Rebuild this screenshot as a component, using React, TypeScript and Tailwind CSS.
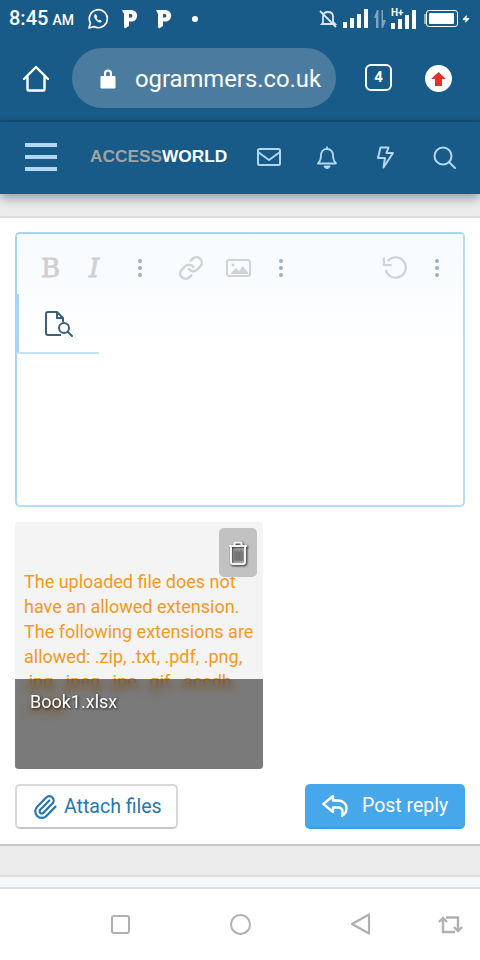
import React from 'react';
import { Link, Paperclip, Zap } from 'lucide-react';

const SignalBars = ({ className }: { className?: string }) => (
  <div className={`flex h-[19px] items-end gap-[3px] ${className || ''}`}>
    <span className="h-[6px] w-[4px] bg-white" />
    <span className="h-[10px] w-[4px] bg-white" />
    <span className="h-[14px] w-[4px] bg-white" />
    <span className="h-[19px] w-[4px] bg-white" />
  </div>
);

const PIcon = ({ className }: { className?: string }) => (
  <svg width="16" height="20" viewBox="0 0 16 20" className={className} fill="white">
    <path fillRule="evenodd" d="M0 1h9.500a5.800 5.800 0 0 1 1 11.500H7V17l-4 2.500-1-1.500V5zM7 5v3.500h2a1.800 1.800 0 0 0 0-3.500z" />
  </svg>
);

const StatusBar = () => (
  <div className="flex h-[37px] items-center justify-between pl-[9px] pr-[10px] text-white">
    <div className="flex items-center">
      <span className="text-[20px] font-medium leading-[37px]">8:45</span>
      <span className="ml-[4px] mt-[3px] text-[14px] font-medium">AM</span>
      <svg width="22" height="22" viewBox="0 0 22 22" fill="none" stroke="white" strokeWidth="1.700" className="ml-[13px]">
        <path d="M2 20l1.400-5A9 9 0 1 1 7 18.600L2 20z" strokeLinejoin="round" />
        <path d="M8 6.500c-1 1-1 3 1 5.300s4 3 5.500 1.700l-1.500-1.500-1.300.7c-1-.5-2-1.500-2.500-2.700l.8-1.100-1-2.100z" fill="white" strokeWidth="0.600" />
      </svg>
      <PIcon className="ml-[13px]" />
      <PIcon className="ml-[18px]" />
      <span className="ml-[20px] h-[6px] w-[6px] rounded-full bg-white" />
    </div>
    <div className="flex items-center">
      <svg width="19" height="20" viewBox="0 0 19 20" fill="none" stroke="#dce6ee" strokeWidth="1.800">
        <path d="M4 14V8c0-3 2-5 5-5s5 2 5 5v5l2 2H3z" />
        <path d="M1 2l16 16" />
      </svg>
      <SignalBars className="ml-[5px]" />
      <svg width="14" height="20" viewBox="0 0 14 20" className="ml-[5px]" fill="#7fa3bd">
        <path d="M1 9l3-8h1.500v18H3V9zM8.500 1H10v10h3l-3 8H8.500z" />
      </svg>
      <div className="relative ml-[4px] h-[20px] w-[25px]">
        <span className="absolute left-0 -top-[1px] text-[10px] font-bold leading-[9px]">H+</span>
        <SignalBars className="absolute bottom-0 left-0" />
      </div>
      <span className="ml-[8px] h-[10px] w-[2px] bg-[#8fb0c8]" />
      <div className="h-[17px] w-[32px] rounded-[3px] border border-white p-[2px]">
        <div className="h-full w-[25px] rounded-[1px] bg-white" />
      </div>
      <Zap size={8} fill="white" stroke="white" className="ml-[4px]" />
    </div>
  </div>
);

const BrowserBar = () => (
  <div className="flex h-[83px] items-start pl-[22px]">
    <svg width="28" height="28" viewBox="0 0 28 28" fill="none" stroke="white" strokeWidth="2.400" strokeLinejoin="round" strokeLinecap="round" className="mt-[28px]">
      <path d="M2 14L14 2l12 12M5.500 12v12.500a1 1 0 0 0 1 1h15a1 1 0 0 0 1-1V12" />
    </svg>
    <div className="ml-[22px] mt-[11px] flex h-[60px] w-[264px] items-center rounded-[30px] bg-[#4b7ca0] pl-[28px] text-white">
      <svg width="16" height="21" viewBox="0 0 16 21" fill="white">
        <path d="M4 8V5.500a4 4 0 0 1 8 0V8h2.500a1 1 0 0 1 1 1v10.500a1 1 0 0 1-1 1h-13a1 1 0 0 1-1-1V9a1 1 0 0 1 1-1zm2 0h4V5.500a2 2 0 0 0-4 0z" />
      </svg>
      <span className="ml-[19px] mt-[3px] text-[23.800px] leading-none">ogrammers.co.uk</span>
    </div>
    <div className="ml-[29px] mt-[27px] flex h-[27px] w-[27px] items-center justify-center rounded-[6px] border-2 border-white text-[15px] font-bold text-white">
      4
    </div>
    <div className="ml-[33px] mt-[28px] flex h-[27px] w-[27px] items-center justify-center rounded-full bg-white">
      <svg width="15" height="14" viewBox="0 0 15 14" fill="#d3392b">
        <path d="M7.500 0L15 7h-4v7H4V7H0z" />
      </svg>
    </div>
  </div>
);

const NavBar = () => (
  <div className="relative z-10 mt-[2px] flex h-[72px] items-center bg-[#185a88] pb-[2px] pl-[25px] shadow-[0_4px_10px_rgba(0,0,0,0.35)]">
    <div className="flex w-[32px] flex-col gap-[8px]">
      <span className="h-[4px] bg-[#b3d7f2]" />
      <span className="h-[4px] bg-[#b3d7f2]" />
      <span className="h-[4px] bg-[#b3d7f2]" />
    </div>
    <div className="ml-[33px] w-[137px] whitespace-nowrap text-[17.300px] font-bold leading-none" style={{ fontFamily: '"Liberation Sans", sans-serif' }}>
      <span className="text-[#a2a2a2]">ACCESS</span>
      <span className="text-white">WORLD</span>
    </div>
    <svg width="24" height="18" viewBox="0 0 24 18" fill="none" stroke="#b3d7f2" strokeWidth="2" strokeLinejoin="round" className="ml-[30px]">
      <rect x="1" y="1" width="22" height="16" rx="1.500" />
      <path d="M1 4l11 8 11-8" />
    </svg>
    <svg width="20" height="23" viewBox="0 0 20 23" fill="none" stroke="#b3d7f2" strokeWidth="1.800" strokeLinejoin="round" className="ml-[36px]">
      <path d="M10 3c-4 0-6 3-6 6.500 0 4-1 6-3 8h18c-2-2-3-4-3-8C16 6 14 3 10 3z" />
      <path d="M10 .5v2.500" />
      <path d="M7.500 20.500h5L10 22.500z" fill="#b3d7f2" />
    </svg>
    <svg width="17" height="23" viewBox="0 0 17 23" fill="none" stroke="#b3d7f2" strokeWidth="2" strokeLinejoin="round" className="ml-[40px]">
      <path d="M3.500 1.500h8l-2 5.500H16L6.500 21.500 8 12H1z" />
    </svg>
    <svg width="23" height="23" viewBox="0 0 23 23" fill="none" stroke="#b3d7f2" strokeWidth="2" strokeLinecap="round" className="ml-[39px]">
      <circle cx="10" cy="10" r="8.500" />
      <path d="M16 16l6 6" />
    </svg>
  </div>
);

const Dots = ({ className }: { className?: string }) => (
  <div className={`flex flex-col gap-[3px] ${className || ''}`}>
    <span className="h-[4px] w-[4px] rounded-full bg-[#9aafc0]" />
    <span className="h-[4px] w-[4px] rounded-full bg-[#9aafc0]" />
    <span className="h-[4px] w-[4px] rounded-full bg-[#9aafc0]" />
  </div>
);

const Editor = () => (
  <div className="mx-[15px] mt-[14px] h-[275px] rounded-[5px] border-2 border-[#b9dcf5] border-l-[#a9d4f2] border-t-[#a9d4f2]">
    <div className="h-[120px] rounded-t-[4px] bg-gradient-to-b from-[#f6fbff] to-white">
      <div className="flex h-[60px] items-center pl-[24px] pt-[7px]">
        <span className="w-[17px] text-[26px] leading-none text-[#d0d0d0] [-webkit-text-stroke:0.8px_#d0d0d0]" style={{ fontFamily: '"DejaVu Serif", serif' }}>
          B
        </span>
        <span className="ml-[31px] w-[16px] text-[26px] italic leading-none text-[#d0d0d0] [-webkit-text-stroke:0.8px_#d0d0d0]" style={{ fontFamily: '"DejaVu Serif", serif' }}>
          I
        </span>
        <Dots className="ml-[33px]" />
        <Link size={26} strokeWidth={2.400} className="ml-[36px] text-[#d3d3d3]" />
        <svg width="25" height="20" viewBox="0 0 25 20" className="ml-[22px]" fill="none" stroke="#d3d3d3" strokeWidth="2">
          <rect x="1" y="2" width="23" height="16" rx="2" />
          <path d="M4 16l6-6 3 3 4-5 6 8z" fill="#d3d3d3" stroke="none" />
          <circle cx="7" cy="7" r="1.500" fill="#d3d3d3" stroke="none" />
        </svg>
        <Dots className="ml-[28px]" />
        <svg width="25" height="26" viewBox="0 0 26 26" fill="none" stroke="#d3d3d3" strokeWidth="2.400" className="ml-[99px]">
          <path d="M6 6a10.500 10.500 0 1 1-2 9" />
          <path d="M2 2v8h8" strokeLinejoin="round" />
        </svg>
        <Dots className="ml-[28px]" />
      </div>
      <div className="-ml-[2px] flex h-[60px] w-[84px] items-center border-b-2 border-l-[4px] border-b-[#c5e2f7] border-l-[#a9d4f2] pl-[26px]">
        <svg width="28" height="26" viewBox="0 0 28 26" fill="none" stroke="#3c5f7f" strokeWidth="2" strokeLinejoin="round" className="mt-[2px]">
          <path d="M16 24H3a2 2 0 0 1-2-2V3a2 2 0 0 1 2-2h9l6 6v4" />
          <path d="M12 1v6h6" />
          <circle cx="19" cy="17" r="5" />
          <path d="M23 21l4 4" strokeLinecap="round" />
        </svg>
      </div>
    </div>
  </div>
);

const Attachment = () => (
  <div className="relative mx-[15px] mt-[15px] h-[247px] w-[248px] overflow-hidden rounded-[3px] bg-[#f4f4f4]">
    <p className="px-[9px] pt-[47px] text-[18px] leading-[25px] text-[#f7981d]">
      The uploaded file does not have an allowed extension. The following extensions are allowed: .zip, .txt, .pdf, .png, .jpg, .jpeg, .jpe, .gif, .accdb, .mdb
    </p>
    <div className="absolute right-[6px] top-[6px] flex h-[49px] w-[38px] items-center justify-center rounded-[5px] bg-[#c2c2c2]">
      <svg width="20" height="24" viewBox="0 0 20 24" fill="none" stroke="#f5f5f5" strokeWidth="2" strokeLinejoin="round" className="drop-shadow-[1px_1px_1px_rgba(0,0,0,0.85)]">
        <path d="M1 5h18M6.500 5V2.500a1 1 0 0 1 1-1h5a1 1 0 0 1 1 1V5" />
        <path d="M3 5v16a2 2 0 0 0 2 2h10a2 2 0 0 0 2-2V5" />
        <path d="M7 8.500v11M10 8.500v11M13 8.500v11" stroke="#7a7a7a" strokeWidth="1.500" />
      </svg>
    </div>
    <div className="absolute bottom-0 left-0 right-0 h-[90px] bg-[#000]/50 px-[15px] pt-[9px] text-[18px] text-white backdrop-blur-[4px] [text-shadow:1px_1px_3px_rgba(0,0,0,0.8)]">
      Book1.xlsx
    </div>
  </div>
);

const Buttons = () => (
  <div className="mx-[15px] mt-[15px] flex justify-between">
    <button className="flex h-[45px] w-[163px] items-center rounded-[5px] border-2 border-[#d8d8d8] border-b-[#c8c8c8] bg-white pl-[15px] text-[19.500px] text-[#2577b1]">
      <Paperclip size={26} strokeWidth={2} className="text-[#2577b1]" />
      <span className="ml-[6px]">Attach files</span>
    </button>
    <button className="flex h-[45px] w-[160px] items-center rounded-[5px] border-b-2 border-b-[#3a9be6] bg-[#47a7eb] pl-[17px] text-[19.500px] text-white">
      <svg width="26" height="24" viewBox="0 0 26 24" fill="none" stroke="white" strokeWidth="2.400" strokeLinejoin="round">
        <path d="M11 2L1.500 10l9.500 8v-4.500h5c4 0 5.500 2.500 4 8.500 2.500-1.500 4.500-4.500 4.500-7.500 0-5-4-8-8.500-8H11z" />
      </svg>
      <span className="ml-[14px]">Post reply</span>
    </button>
  </div>
);

const SystemNav = () => (
  <div className="flex h-[70px] items-center bg-white text-[#b0b0b0]">
    <span className="ml-[111px] h-[19px] w-[19px] rounded-[3px] border-2 border-[#b0b0b0]" />
    <span className="ml-[100px] h-[21px] w-[21px] rounded-full border-2 border-[#b0b0b0]" />
    <svg width="21" height="22" viewBox="0 0 21 22" fill="none" stroke="#b0b0b0" strokeWidth="2.200" strokeLinejoin="round" className="ml-[99px]">
      <path d="M2 11L19 1.500v19z" />
    </svg>
    <svg width="26" height="19" viewBox="0 0 26 19" fill="none" stroke="#b0b0b0" strokeWidth="2.400" className="ml-[66px]">
      <path d="M6 4v13h12M9 2.500h12v12" />
      <path d="M2 7l4-4 4 4M17 12l4 4 4-4" />
    </svg>
  </div>
);

export default function App() {
  return (
    <div className="flex h-[960px] w-[480px] flex-col overflow-hidden bg-white" style={{ fontFamily: 'Roboto, sans-serif' }}>
      <div className="bg-[#185a88]">
        <StatusBar />
        <BrowserBar />
      </div>
      <div className="bg-[#144e78]">
        <NavBar />
      </div>
      <div className="h-[24px] border-b-2 border-b-[#dedede] bg-[#ebebeb]" />
      <Editor />
      <Attachment />
      <Buttons />
      <div className="mt-[15px] h-[33px] border-y-2 border-t-[#c8c8c8] border-b-[#dcdcdc] bg-[#ebebeb]" />
      <div className="h-[12px] border-b-2 border-b-[#dedede] bg-[#f5f9fe]" />
      <SystemNav />
    </div>
  );
}
